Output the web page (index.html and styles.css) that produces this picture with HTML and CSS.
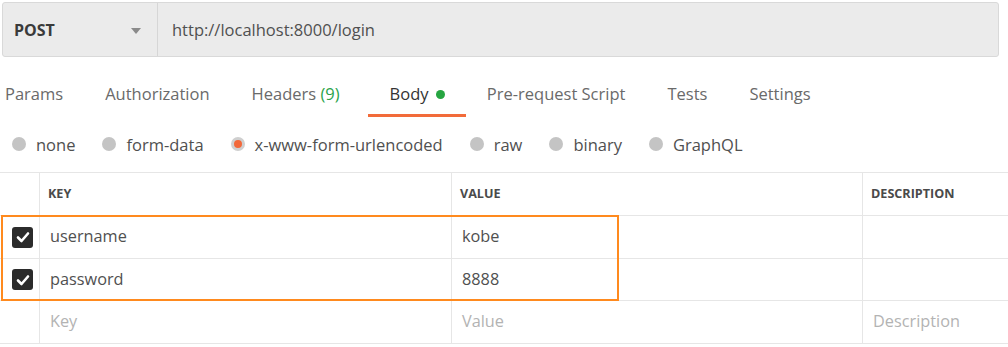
FILE: index.html
```html
<!DOCTYPE html>
<html>
<head>
<meta charset="utf-8">
<link rel="stylesheet" href="styles.css">
</head>
<body>
<div class="urlbar">
  <div class="method">
    <span class="method-name">POST</span>
    <span class="caret"></span>
  </div>
  <div class="url">http://localhost:8000/login</div>
</div>

<div class="tabs">
  <div class="tab first">Params</div>
  <div class="tab">Authorization</div>
  <div class="tab">Headers <span class="count">(9)</span></div>
  <div class="tab active">Body <span class="dot"></span></div>
  <div class="tab">Pre-request Script</div>
  <div class="tab">Tests</div>
  <div class="tab">Settings</div>
</div>

<div class="radios">
  <label class="radio"><span class="circle"></span>none</label>
  <label class="radio"><span class="circle"></span>form-data</label>
  <label class="radio"><span class="circle on"></span>x-www-form-urlencoded</label>
  <label class="radio"><span class="circle"></span>raw</label>
  <label class="radio"><span class="circle"></span>binary</label>
  <label class="radio"><span class="circle"></span>GraphQL</label>
</div>

<div class="table">
  <div class="row head">
    <div class="cell check"></div>
    <div class="cell key">KEY</div>
    <div class="cell value">VALUE</div>
    <div class="cell desc">DESCRIPTION</div>
  </div>
  <div class="row">
    <div class="cell check"><span class="box"><svg viewBox="0 0 20 20" width="20" height="20"><path d="M5 10.5 L8.5 14 L15 6.5" fill="none" stroke="#fff" stroke-width="2.6" stroke-linecap="round" stroke-linejoin="round"/></svg></span></div>
    <div class="cell key">username</div>
    <div class="cell value">kobe</div>
    <div class="cell desc"></div>
  </div>
  <div class="row short">
    <div class="cell check"><span class="box"><svg viewBox="0 0 20 20" width="20" height="20"><path d="M5 10.5 L8.5 14 L15 6.5" fill="none" stroke="#fff" stroke-width="2.6" stroke-linecap="round" stroke-linejoin="round"/></svg></span></div>
    <div class="cell key">password</div>
    <div class="cell value">8888</div>
    <div class="cell desc"></div>
  </div>
  <div class="row placeholder">
    <div class="cell check"></div>
    <div class="cell key">Key</div>
    <div class="cell value">Value</div>
    <div class="cell desc">Description</div>
  </div>
  <div class="highlight"></div>
</div>
</body>
</html>
```

FILE: styles.css
```css
* { box-sizing: border-box; }
html, body { margin: 0; padding: 0; background: #fff; }
body {
  font-family: "Open Sans", "Liberation Sans", sans-serif;
  color: #505050;
  width: 1008px;
  height: 347px;
  overflow: hidden;
}

.urlbar {
  display: flex;
  margin: 2px 0 0 2px;
  width: 997px;
  height: 55px;
  background: #ebebeb;
  border: 1px solid #d9d9d9;
  border-radius: 3px;
}
.method {
  width: 155px;
  display: flex;
  align-items: center;
  justify-content: space-between;
  padding: 0 16px 0 11px;
  border-right: 1px solid #d6d6d6;
}
.method-name {
  font-weight: 700;
  font-size: 16px;
  color: #3a3a3a;
}
.caret {
  width: 0; height: 0;
  border-left: 5px solid transparent;
  border-right: 5px solid transparent;
  border-top: 6px solid #8a8a8a;
  margin-top: 2px;
}
.url {
  display: flex;
  align-items: center;
  padding-left: 14px;
  font-size: 16.5px;
  color: #505050;
}

.tabs {
  display: flex;
  margin-top: 17px;
  height: 43px;
}
.tab {
  padding: 0 21px;
  font-size: 16.5px;
  color: #6a6a6a;
  height: 43px;
  line-height: 40px;
  white-space: nowrap;
}
.tab.first { padding-left: 5px; }
.tab .count { color: #2aa34a; }
.tab.active {
  color: #333;
  border-bottom: 3px solid #f26b3a;
  padding: 0 21px 0 22px;
  margin-left: 7px;
}
.dot {
  display: inline-block;
  width: 9px; height: 9px;
  border-radius: 50%;
  background: #26a541;
  margin-left: 3px;
  vertical-align: 1px;
}

.radios {
  display: flex;
  height: 55px;
  align-items: center;
  padding-left: 12px;
  padding-bottom: 1px;
}
.radio {
  display: flex;
  align-items: center;
  font-size: 16.5px;
  color: #505050;
  margin-right: 27px;
}
.circle {
  width: 14px; height: 14px;
  border-radius: 50%;
  background: #c4c4c4;
  margin-right: 10px;
}
.circle.on {
  background: #f2683a;
  border: 3px solid #cfcfcf;
}

.table {
  position: relative;
  border-top: 1px solid #e6e6e6;
}
.row {
  display: flex;
  height: 43px;
  border-bottom: 1px solid #e6e6e6;
}
.row.short { height: 42px; }
.cell {
  display: flex;
  align-items: center;
  padding-left: 10px;
  padding-bottom: 2px;
  font-size: 16.3px;
  color: #505050;
}
.cell.check {
  width: 40px;
  padding-left: 12px;
  padding-bottom: 0;
  border-right: 1px solid #e6e6e6;
}
.cell.key {
  width: 412px;
  border-right: 1px solid #e6e6e6;
}
.cell.value {
  width: 411px;
  border-right: 1px solid #e6e6e6;
}
.cell.desc { flex: 1; }
.head .cell {
  font-size: 12.6px;
  font-weight: 700;
  color: #4a4a4a;
  padding-left: 8px;
}
.head .cell.check { padding-left: 0; }
.placeholder .cell { color: #b3b3b3; }
.box {
  width: 21px; height: 21px;
  border-radius: 3px;
  background: #2b2b2b;
  display: flex;
  align-items: center;
  justify-content: center;
}
.box svg { display: block; }

.highlight {
  position: absolute;
  left: 1px;
  top: 42px;
  width: 618px;
  height: 86px;
  border: 2px solid #ff8a1e;
  pointer-events: none;
}
```
